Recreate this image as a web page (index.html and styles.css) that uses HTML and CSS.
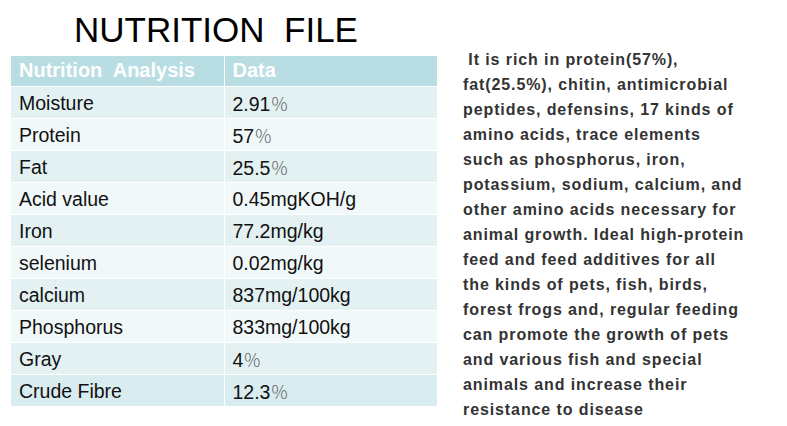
FILE: index.html
```html
<!DOCTYPE html>
<html>
<head>
<meta charset="utf-8">
<link rel="stylesheet" href="styles.css">
</head>
<body>
<div class="page">
  <div class="left">
    <h1 class="title">NUTRITION&nbsp; FILE</h1>
    <table class="nut">
      <thead>
        <tr><th>Nutrition&nbsp; Analysis</th><th>Data</th></tr>
      </thead>
      <tbody>
        <tr class="band"><td>Moisture</td><td>2.91<span class="pct">％</span></td></tr>
        <tr><td>Protein</td><td>57<span class="pct">％</span></td></tr>
        <tr class="band"><td>Fat</td><td>25.5<span class="pct">％</span></td></tr>
        <tr><td>Acid value</td><td>0.45mgKOH/g</td></tr>
        <tr class="band"><td>Iron</td><td>77.2mg/kg</td></tr>
        <tr><td>selenium</td><td>0.02mg/kg</td></tr>
        <tr class="band"><td>calcium</td><td>837mg/100kg</td></tr>
        <tr><td>Phosphorus</td><td>833mg/100kg</td></tr>
        <tr class="band"><td>Gray</td><td>4<span class="pct">％</span></td></tr>
        <tr class="band dark"><td>Crude Fibre</td><td>12.3<span class="pct">％</span></td></tr>
      </tbody>
    </table>
  </div>
  <div class="right">
    <p class="desc">&nbsp;It is rich in protein(57%),<br>fat(25.5%), chitin, antimicrobial<br>peptides, defensins, 17 kinds of<br>amino acids, trace elements<br>such as phosphorus, iron,<br>potassium, sodium, calcium, and<br>other amino acids necessary for<br>animal growth. Ideal high-protein<br>feed and feed additives for all<br>the kinds of pets, fish, birds,<br>forest frogs and, regular feeding<br>can promote the growth of pets<br>and various fish and special<br>animals and increase their<br>resistance to disease</p>
  </div>
</div>
</body>
</html>
```

FILE: styles.css
```css
html, body {
  margin: 0;
  padding: 0;
  background: #ffffff;
}
body {
  width: 787px;
  height: 426px;
  overflow: hidden;
  font-family: "Liberation Sans", Arial, sans-serif;
}
.page {
  display: flex;
  align-items: flex-start;
}
.left {
  width: 426px;
  margin-left: 11px;
  display: flex;
  flex-direction: column;
}
.title {
  margin: 10px 0 0 0;
  font-weight: normal;
  font-size: 35px;
  line-height: 40px;
  color: #000;
  text-align: center;
  padding-right: 16px;
}
.nut {
  margin-top: 6px;
  width: 426px;
  border-collapse: collapse;
  table-layout: fixed;
}
.nut th, .nut td {
  width: 50%;
  text-align: left;
  padding: 0 0 0 8px;
  border: 1px solid #ffffff;
  border-top: 0;
  border-bottom: 1px solid #ffffff;
  white-space: nowrap;
  box-sizing: border-box;
}
.nut th:first-child, .nut td:first-child { border-left: 0; }
.nut th:last-child, .nut td:last-child { border-right: 0; }
.nut th {
  height: 30px;
  background: #b8dde2;
  color: #ffffff;
  font-size: 20px;
  font-weight: bold;
}
.nut td {
  height: 32px;
  padding-top: 2px;
  font-size: 19.5px;
  color: #111;
  background: #f1f8f9;
}
.nut tr.band td {
  background: #e3f1f3;
}
.nut tr.dark td {
  background: #d9ecef;
}
.pct {
  font-family: "Noto Sans CJK SC", sans-serif;
  color: #666;
  font-size: 18px;
  font-weight: 300;
}
.right {
  width: 320px;
  margin-left: 26px;
}
.desc {
  margin: 47px 0 0 0;
  font-family: "Liberation Sans", Arial, sans-serif;
  font-size: 16px;
  line-height: 25px;
  font-weight: bold;
  letter-spacing: 0.9px;
  color: #333;
  white-space: nowrap;
}
```
